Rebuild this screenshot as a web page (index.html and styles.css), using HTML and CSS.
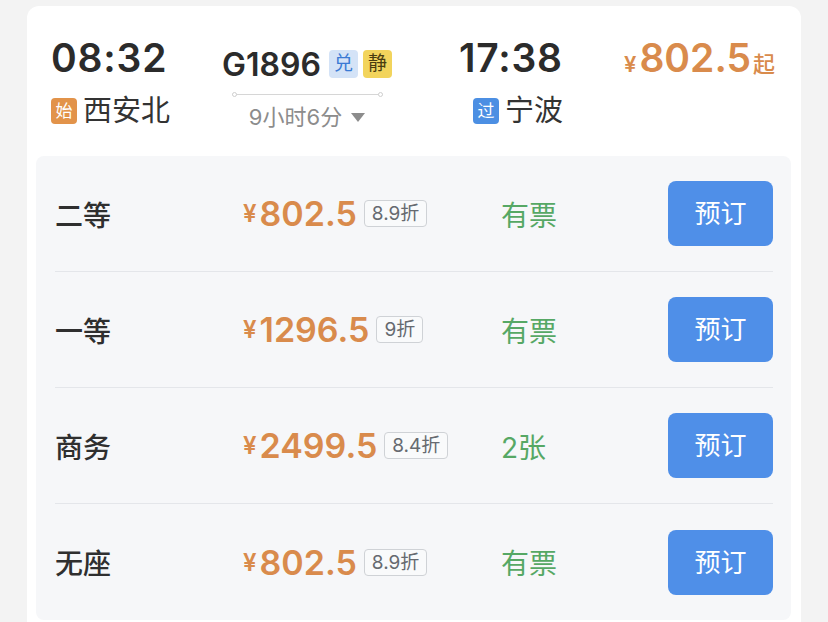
FILE: index.html
```html
<!DOCTYPE html>
<html>
  <head>
    <meta charset="utf-8" />
    <title>G1896</title>
    <link rel="stylesheet" href="styles.css">
  </head>
  <body>
    <div class="card">
      <div class="train-head">
        <div class="col col-dep">
          <div class="time">08:32</div>
          <div class="station"><span class="tag tag-start">始</span>西安北</div>
        </div>
        <div class="col col-train">
          <div class="train-no">G1896<span class="mark mark-dui">兑</span><span class="mark mark-jing">静</span></div>
          <div class="track"></div>
          <div class="duration">9小时6分<span class="arrow"></span></div>
        </div>
        <div class="col col-arr">
          <div class="time">17:38</div>
          <div class="station"><span class="tag tag-pass">过</span>宁波</div>
        </div>
        <div class="col col-price">
          <div class="low-price"><span class="yen">¥</span>802.5<span class="qi">起</span></div>
        </div>
      </div>

      <div class="seats">
        <div class="seat">
          <div class="seat-name">二等</div>
          <div class="seat-price"><span class="yen">¥</span>802.5<span class="disc">8.9折</span></div>
          <div class="seat-left">有票</div>
          <a class="btn">预订</a>
        </div>
        <div class="seat">
          <div class="seat-name">一等</div>
          <div class="seat-price"><span class="yen">¥</span>1296.5<span class="disc">9折</span></div>
          <div class="seat-left">有票</div>
          <a class="btn">预订</a>
        </div>
        <div class="seat">
          <div class="seat-name">商务</div>
          <div class="seat-price"><span class="yen">¥</span>2499.5<span class="disc">8.4折</span></div>
          <div class="seat-left">2张</div>
          <a class="btn">预订</a>
        </div>
        <div class="seat">
          <div class="seat-name">无座</div>
          <div class="seat-price"><span class="yen">¥</span>802.5<span class="disc">8.9折</span></div>
          <div class="seat-left">有票</div>
          <a class="btn">预订</a>
        </div>
      </div>
    </div>
  </body>
</html>
```

FILE: styles.css
```css
* {
  margin: 0;
  padding: 0;
  box-sizing: border-box;
}
body {
  background: #f3f3f3;
  font-family: Inter, "Noto Sans CJK SC", sans-serif;
  color: #333333;
  overflow: hidden;
}
.card {
  width: 774px;
  height: 640px;
  margin: 6px 0 0 27px;
  padding: 0 10px 0 9px;
  background: #ffffff;
  border-radius: 12px;
}

/* 车次信息 */
.train-head {
  display: flex;
  height: 150px;
  padding: 29px 0 0 15px;
}
.col {
  display: flex;
  flex-direction: column;
}
.col-dep {
  width: 170px;
}
.col-train {
  width: 172px;
  align-items: center;
}
.col-arr {
  width: 165px;
  margin-left: 66px;
}
.time {
  font-size: 39px;
  font-weight: 600;
  line-height: 46px;
  color: #2b2b2b;
  letter-spacing: 0.8px;
}
.station {
  display: flex;
  align-items: center;
  margin-top: 15px;
  font-size: 29px;
  line-height: 30px;
  color: #333333;
}
.col-arr .station {
  padding-left: 14px;
}
.tag {
  width: 26px;
  height: 26px;
  margin-right: 6px;
  border-radius: 4px;
  font-size: 17px;
  line-height: 26px;
  text-align: center;
  color: #ffffff;
}
.tag-start {
  background: #e2934a;
}
.tag-pass {
  background: #4c8fe3;
}
.train-no {
  display: flex;
  align-items: center;
  height: 30px;
  margin-top: 14px;
  font-size: 32px;
  font-weight: 600;
  color: #2b2b2b;
}
.mark {
  width: 29px;
  height: 28px;
  margin-left: 5px;
  border-radius: 4px;
  font-size: 19px;
  font-weight: 400;
  line-height: 28px;
  text-align: center;
}
.train-no .mark-dui {
  margin-left: 8px;
  background: #d4e3f7;
  color: #3a7ad4;
}
.mark-jing {
  background: #f2d45c;
  color: #4a3d10;
}
.track {
  position: relative;
  width: 151px;
  height: 1px;
  margin-top: 15px;
  background: #d6d6d6;
}
.track::before,
.track::after {
  content: "";
  position: absolute;
  top: -2px;
  width: 3px;
  height: 3px;
  border: 1px solid #cfcfcf;
  border-radius: 50%;
  background: #ffffff;
}
.track::before {
  left: 0;
}
.track::after {
  right: 0;
}
.duration {
  display: flex;
  align-items: center;
  margin-top: 9px;
  font-size: 22px;
  line-height: 26px;
  color: #8c8c8c;
}
.arrow {
  width: 0;
  height: 0;
  margin-left: 9px;
  border-left: 7px solid transparent;
  border-right: 7px solid transparent;
  border-top: 9px solid #8c8c8c;
}
.low-price {
  font-size: 39px;
  font-weight: 600;
  line-height: 46px;
  color: #d98b4c;
}
.low-price .yen {
  font-size: 22px;
  margin-right: 3px;
}
.qi {
  font-size: 22px;
  font-weight: 500;
  margin-left: 2px;
}

/* 座位列表 */
.seats {
  background: #f6f7f9;
  border-radius: 8px;
  padding: 0 18px 0 19px;
}
.seat {
  display: flex;
  align-items: center;
  height: 116px;
  border-bottom: 1px solid #e4e6ea;
}
.seat:last-child {
  border-bottom: none;
}
.seat-name {
  width: 188px;
  font-size: 28px;
  font-weight: 500;
  color: #2f2f2f;
}
.seat-price {
  display: flex;
  align-items: center;
  width: 258px;
  font-size: 34px;
  font-weight: 600;
  color: #d98b4c;
}
.seat-price .yen {
  font-size: 24px;
  margin-right: 3px;
}
.disc {
  height: 27px;
  margin-left: 7px;
  padding: 0 7px;
  border: 1px solid #cfd2d6;
  border-radius: 4px;
  background: #f9fafb;
  font-size: 19px;
  font-weight: 400;
  line-height: 25px;
  color: #666a70;
}
.seat-left {
  flex: 1;
  font-size: 28px;
  color: #56a865;
}
.btn {
  width: 105px;
  height: 65px;
  border-radius: 8px;
  background: #4f8fe8;
  font-size: 26px;
  line-height: 65px;
  text-align: center;
  color: #ffffff;
}
```
